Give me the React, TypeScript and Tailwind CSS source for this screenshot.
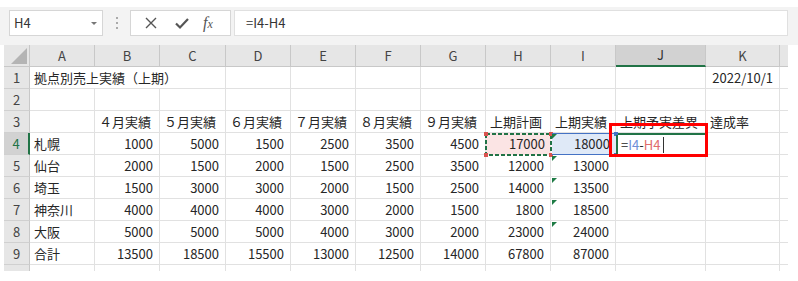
import React from 'react';

// 列幅(px) — 行見出しの後ろから A..K と右端の切れた L
const COLS = [
  { key: 'A', w: 'w-[65px]' },
  { key: 'B', w: 'w-[65px]' },
  { key: 'C', w: 'w-[66px]' },
  { key: 'D', w: 'w-[65px]' },
  { key: 'E', w: 'w-[65px]' },
  { key: 'F', w: 'w-[65px]' },
  { key: 'G', w: 'w-[65px]' },
  { key: 'H', w: 'w-[65px]' },
  { key: 'I', w: 'w-[65px]' },
  { key: 'J', w: 'w-[90px]' },
  { key: 'K', w: 'w-[74px]' },
  { key: '', w: 'w-[8px]' },
];

type Cell = { v?: string; num?: boolean; noRight?: boolean; extra?: string };

const data: [string, ...(string | number)[]][] = [
  ['札幌', 1000, 5000, 1500, 2500, 3500, 4500, 17000, 18000],
  ['仙台', 2000, 1500, 2000, 1500, 2500, 3500, 12000, 13000],
  ['埼玉', 1500, 3000, 3000, 2000, 1500, 2500, 14000, 13500],
  ['神奈川', 4000, 4000, 4000, 3000, 2000, 1500, 1800, 18500],
  ['大阪', 5000, 5000, 5000, 4000, 3000, 2000, 23000, 24000],
  ['合計', 13500, 18500, 15500, 13000, 12500, 14000, 67800, 87000],
];

function buildRows(): Cell[][] {
  const blank = (): Cell[] => COLS.map(() => ({}));
  const r1 = blank();
  r1[0] = { v: '拠点別売上実績（上期）', noRight: true };
  r1[1] = { noRight: true };
  r1[10] = { v: '2022/10/1', num: true };
  const r2 = blank();
  const r3 = blank();
  ['４月実績', '５月実績', '６月実績', '７月実績', '８月実績', '９月実績', '上期計画', '上期実績', '上期予実差異', '達成率'].forEach(
    (t, i) => (r3[i + 1] = { v: t })
  );
  const rest = data.map((row, ri) => {
    const r = blank();
    row.forEach((v, i) => {
      r[i] = { v: String(v), num: typeof v === 'number' };
    });
    if (ri === 5) r[8] = { ...r[8], extra: 'pr-[3px]' };
    return r;
  });
  return [r1, r2, r3, ...rest];
}

function FormulaBar() {
  return (
    <div className="h-[38px] bg-[#f3f3f3] flex items-start pt-[3px] pl-[9px] pr-[10px] gap-0">
      <div className="w-[94px] h-[26px] bg-white border border-[#d6d6d6] flex items-center pl-[4px] pr-[5px] text-[13px] text-[#333]">
        <span className="flex-1">H4</span>
        <span className="w-0 h-0 border-l-[3px] border-r-[3px] border-t-[3px] border-l-transparent border-r-transparent border-t-[#777]" />
      </div>
      <div className="w-[27px] h-[26px] flex flex-col items-center justify-center gap-[3px]">
        <span className="w-[2px] h-[2px] bg-[#aaa]" />
        <span className="w-[2px] h-[2px] bg-[#aaa]" />
        <span className="w-[2px] h-[2px] bg-[#aaa]" />
      </div>
      <div className="w-[101px] h-[26px] bg-white border border-[#d6d6d6] flex items-center">
        <svg width="32" height="24" viewBox="0 0 32 24" className="ml-[4px]">
          <path d="M11 7 L21 17 M21 7 L11 17" stroke="#555" strokeWidth="1.4" />
        </svg>
        <svg width="30" height="24" viewBox="0 0 30 24">
          <path d="M9 12.5 L13 16.5 L21 8" stroke="#555" strokeWidth="2.2" fill="none" />
        </svg>
        <span className="ml-[6px] text-[16px] italic text-[#555] [font-family:'Liberation_Serif',serif] leading-none">
          f<span className="text-[12px]">x</span>
        </span>
      </div>
      <div className="ml-[3px] flex-1 h-[26px] bg-white border border-[#e0e0e0] flex items-center pl-[11px] text-[13px] text-[#333]">
        =I4-H4
      </div>
    </div>
  );
}

function HeaderRow() {
  return (
    <div className="flex h-[22px]">
      <div className="w-[26px] h-full shrink-0 bg-[#e6e6e6] border-r border-b border-[#c8c8c8] flex items-end justify-end pr-[2px] pb-[2px]">
        <svg width="16" height="16" viewBox="0 0 16 16" className="block shrink-0">
          <polygon points="16,0 16,16 0,16" fill="#b4b4b4" />
        </svg>
      </div>
      {COLS.map((c) => (
        <div
          key={c.key || 'L'}
          className={`${c.w} h-full flex items-center justify-center text-[13px] border-r ${
            c.key === 'J'
              ? 'bg-[#d2d2d2] border-b-2 border-b-[#217346] border-r-[#c8c8c8] text-[#333]'
              : 'bg-[#e6e6e6] border-b border-[#c8c8c8] text-[#444]'
          } ${c.key === '' ? 'border-r-0' : ''}`}
        >
          {c.key}
        </div>
      ))}
    </div>
  );
}

function Row({ n, cells }: { n: number; cells: Cell[] }) {
  const sel = n === 4;
  return (
    <div className="flex h-[22px]">
      <div
        className={`w-[26px] h-full flex items-center justify-center text-[13px] border-b border-[#d0d0d0] ${
          sel ? 'bg-[#d2d2d2] text-[#217346] border-r-2 border-r-[#217346]' : 'bg-[#e6e6e6] text-[#444] border-r border-r-[#c8c8c8]'
        }`}
      >
        {n}
      </div>
      {cells.map((c, i) => (
        <div
          key={i}
          className={`${COLS[i].w} h-full flex items-center whitespace-nowrap text-[13px] text-[#262626] border-b border-[#e1e1e1] ${
            c.noRight || i === COLS.length - 1 ? '' : 'border-r'
          } ${c.num ? 'justify-end pr-[6px]' : 'pl-[4px]'} ${c.extra ?? ''}`}
        >
          {c.v}
        </div>
      ))}
    </div>
  );
}

export default function App() {
  const rows = buildRows();
  return (
    <div className="relative w-[798px] h-[281px] bg-white overflow-hidden [font-family:'Noto_Sans_CJK_JP','Noto_Sans',sans-serif]">
      <div className="h-[7px]" />
      <FormulaBar />
      <div className="pl-[4px] w-[792px]">
        <HeaderRow />
        {rows.map((cells, i) => (
          <Row key={i} n={i + 1} cells={cells} />
        ))}
        <div className="flex h-[6px]">
          <div className="w-[26px] h-full bg-[#e6e6e6] border-r border-[#c8c8c8]" />
          {COLS.map((c, i) => (
            <div key={i} className={`${c.w} h-full ${i === COLS.length - 1 ? '' : 'border-r border-[#e1e1e1]'}`} />
          ))}
        </div>
      </div>

      {/* H4: 参照セル（コピー枠の点線） */}
      <div className="absolute left-[486px] top-[133px] w-[65px] h-[22px] bg-[#fbe4e4] flex items-center justify-end pr-[6px] text-[13px] text-[#262626]">
        17000
      </div>
      <svg className="absolute left-[485px] top-[133px]" width="67" height="23">
        <rect x="1" y="1" width="65" height="21" fill="none" stroke="#217346" strokeWidth="2" strokeDasharray="4 2" />
      </svg>
      <span className="absolute left-[484px] top-[132px] w-[4px] h-[4px] bg-[#d9534f]" />
      <span className="absolute left-[549px] top-[132px] w-[4px] h-[4px] bg-[#d9534f]" />
      <span className="absolute left-[484px] top-[153px] w-[4px] h-[4px] bg-[#d9534f]" />
      <span className="absolute left-[549px] top-[153px] w-[4px] h-[4px] bg-[#d9534f]" />

      {/* I4: 参照セル（青枠） */}
      <div className="absolute left-[552px] top-[133px] w-[64px] h-[22px] bg-[#dfe9f7] border-t border-b border-[#4472c4] flex items-center justify-end pr-[6px] text-[13px] text-[#262626]">
        18000
      </div>
      <span className="absolute left-[614px] top-[132px] w-[4px] h-[4px] bg-[#4472c4]" />
      <span className="absolute left-[614px] top-[153px] w-[4px] h-[4px] bg-[#4472c4]" />

      {/* エラーインジケーター */}
      {[133, 155, 177, 199, 221].map((t) => (
        <span
          key={t}
          style={{ top: t + 1 }}
          className="absolute left-[552px] w-0 h-0 border-t-[5px] border-r-[5px] border-t-[#1e7b45] border-r-transparent"
        />
      ))}

      {/* J4: 編集中のセル */}
      <div className="absolute left-[616px] top-[133px] w-[91px] h-[23px] bg-white border-2 border-[#217346] flex items-center pl-[3px] text-[13px] text-[#262626]">
        <span>=</span>
        <span className="text-[#6d8fd8]">I4</span>
        <span>-</span>
        <span className="text-[#e06b6b]">H4</span>
        <span className="ml-[3px] w-[1px] h-[16px] bg-[#333]" />
      </div>
      <span className="absolute left-[615px] top-[132px] w-[3px] h-[3px] bg-[#4472c4]" />

      {/* 注釈の赤枠 */}
      <div className="absolute left-[609px] top-[123px] w-[99px] h-[34px] border-[3px] border-[#ff0000]" />
    </div>
  );
}
